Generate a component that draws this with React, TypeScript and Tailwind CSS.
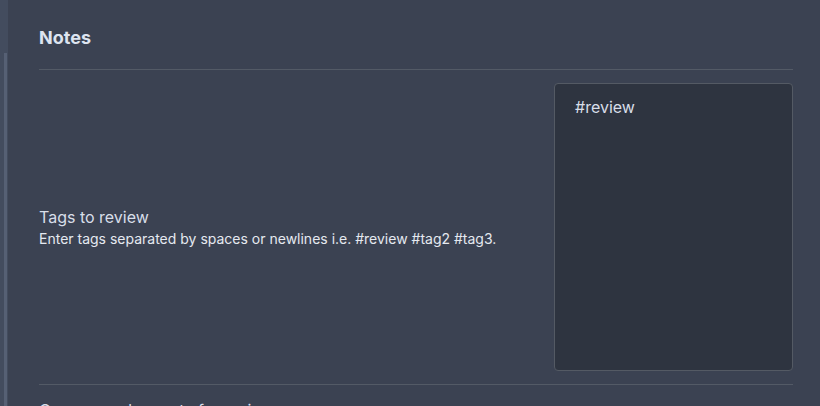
export default function App() {
  return (
    <div
      className="flex h-[406px] w-[820px] overflow-hidden bg-[#3b4252]"
      style={{ fontFamily: 'Inter, "Noto Sans", sans-serif' }}
    >
      <div className="relative w-[8px] shrink-0 bg-[#434c5e]">
        <div className="absolute left-[4px] top-[53px] h-[360px] w-[3px] bg-[#566074]" />
      </div>
      <div className="flex-1 pl-[31px] pr-[27px] pt-[27px]">
        <h3 className="text-[18px] font-bold leading-[22px] text-[#dde4f0]">Notes</h3>
        <div className="mt-[20px] border-t border-[#535a66]" />
        <div className="flex items-center justify-between border-b border-[#535a66] py-[13px]">
          <div>
            <div className="text-[16px] leading-[20px] text-[#d8dee9]">Tags to review</div>
            <div className="mt-[3px] text-[14px] leading-[18px] text-[#e5e9f0]">
              Enter tags separated by spaces or newlines i.e. #review #tag2 #tag3.
            </div>
          </div>
          <textarea
            className="h-[288px] w-[239px] resize-none rounded-[4px] border border-[#545a64] bg-[#2e3440] px-[20px] pb-[12px] pt-[13px] text-[16px] leading-[20px] text-[#d8dee9] outline-none"
            defaultValue="#review"
          />
        </div>
        <div className="pt-[15px]">
          <div className="text-[16px] leading-[20px] text-[#d8dee9]">Open a random note for review</div>
        </div>
      </div>
    </div>
  )
}
